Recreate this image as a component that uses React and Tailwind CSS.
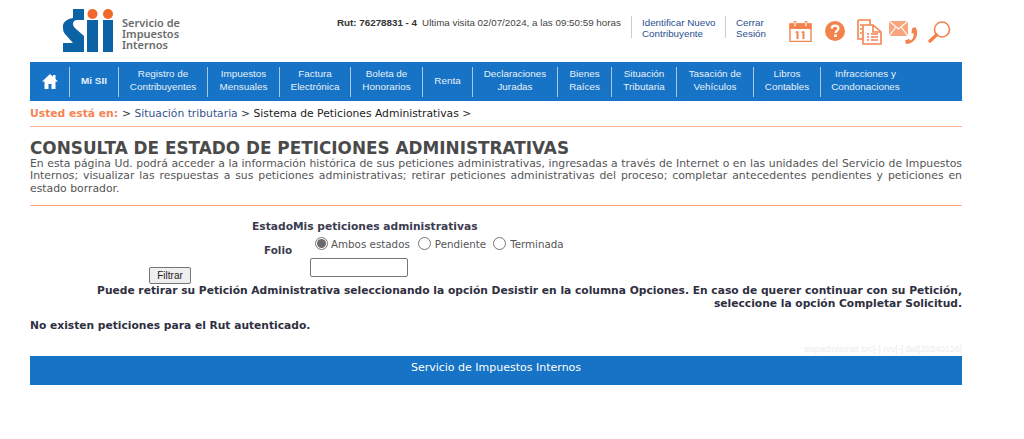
const navItems = [
  { w: 49, l: ["Mi SII"], bold: true },
  { w: 89, l: ["Registro de", "Contribuyentes"] },
  { w: 72, l: ["Impuestos", "Mensuales"] },
  { w: 71, l: ["Factura", "Electrónica"] },
  { w: 72, l: ["Boleta de", "Honorarios"] },
  { w: 50, l: ["Renta"] },
  { w: 85, l: ["Declaraciones", "Juradas"] },
  { w: 54, l: ["Bienes", "Raíces"] },
  { w: 65, l: ["Situación", "Tributaria"] },
  { w: 77, l: ["Tasación de", "Vehículos"] },
  { w: 67, l: ["Libros", "Contables"] },
  { w: 90, l: ["Infracciones y", "Condonaciones"] },
];

function Logo() {
  return (
    <svg width="52" height="44" viewBox="0 0 52 44" className="block">
      <path fill="#0b62a4" d="M10 0H21V11H14C11 11 10 13 10 15C10 17 11 18 13 20L21 27V43H0V34H10L2 25C0 23 0 20 0 17C0 13 4 10 10 9Z" />
      <rect x="24" y="11" width="11" height="32" fill="#0b62a4" />
      <rect x="40" y="11" width="10" height="32" fill="#0b62a4" />
      <circle cx="29.5" cy="5" r="5" fill="#f2672a" />
      <circle cx="45" cy="5" r="5" fill="#f2672a" />
    </svg>
  );
}

const orange = "#f4824d";

function IconCal() {
  return (
    <svg width="23" height="21" viewBox="0 0 23 21" fill="none" stroke={orange}>
      <rect x="1" y="3" width="21" height="17.5" strokeWidth="1.4" />
      <rect x="1" y="3" width="21" height="4.5" fill={orange} />
      <rect x="5" y="0.5" width="2" height="5" fill="#fff" strokeWidth="0.8" />
      <rect x="16" y="0.5" width="2" height="5" fill="#fff" strokeWidth="0.8" />
      <path d="M8.5 10.5V18M14.5 10.5V18" strokeWidth="2" />
      <path d="M6.5 11.5L8.5 10.5M12.5 11.5L14.5 10.5" strokeWidth="1.3" />
    </svg>
  );
}
function IconHelp() {
  return (
    <svg width="20" height="20" viewBox="0 0 20 20">
      <circle cx="10" cy="10" r="10" fill={orange} />
      <path d="M6.7 7.6C6.8 5.6 8.2 4.6 10 4.6C12 4.6 13.4 5.7 13.4 7.4C13.4 9.7 10.6 9.6 10.6 12" fill="none" stroke="#fff" strokeWidth="2.2" />
      <rect x="9.2" y="13.4" width="2.6" height="2.6" fill="#fff" />
    </svg>
  );
}
function IconDocs() {
  return (
    <svg width="25" height="26" viewBox="0 0 25 26" fill="none" stroke={orange} strokeWidth="1.6">
      <path d="M1 1H13V6M6 20H1V1" />
      <path d="M6 6H16L24 13V25H6Z" fill="#fff" />
      <path d="M16 6V13H24" />
      <path d="M3 6H5M3 10H5M3 14H5" />
      <path d="M10 15H12M14 15H21M10 18H12M14 18H21M10 21H12M14 21H21" strokeWidth="1.4" />
    </svg>
  );
}
function IconMail() {
  return (
    <svg width="31" height="23" viewBox="0 0 31 23" fill="none">
      <rect x="0" y="0" width="19" height="15" fill="#f8a47c" />
      <path d="M0 0L9.5 8L19 0M0 15L7 6M19 15L12 6" stroke="#fff" strokeWidth="1.2" />
      <path d="M26 6C31 11 27 23 17 23L16 19.5L20 18L21.5 19.5C24 18.5 25 15 24.6 12.5L22.5 12L23 7.5Z" fill={orange} />
    </svg>
  );
}
function IconSearch() {
  return (
    <svg width="23" height="22" viewBox="0 0 23 22" fill="none" stroke={orange}>
      <circle cx="14" cy="8.5" r="7.5" strokeWidth="1.6" />
      <path d="M8.5 14L2 20" strokeWidth="3.4" strokeLinecap="round" />
    </svg>
  );
}

function Radio({ checked, label, className }) {
  return (
    <span className={"inline-flex items-center " + (className || "")}>
      <span className={"w-[13px] h-[13px] rounded-full border border-[#767676] flex items-center justify-center bg-white mb-[3px] " + (checked ? "mr-[3px]" : "mr-[4px]")}>
        {checked && <span className="w-[9px] h-[9px] rounded-full bg-[#6b6b6b]" />}
      </span>
      {label}
    </span>
  );
}

export default function App() {
  return (
    <div className="w-[1024px] h-[439px] bg-white overflow-hidden font-['DejaVu_Sans',sans-serif] text-[10.7px] text-[#444]">
      <div className="mx-[30px] w-[932px]">
        {/* header */}
        <div className="h-[62px] flex">
          <div className="w-[92px] pl-[33px] pt-[9px] shrink-0"><Logo /></div>
          <div className="w-[215px] shrink-0 pt-[17px] font-['Noto_Sans',sans-serif] font-semibold text-[11px] leading-[11px] text-[#6b6b6b]">
            Servicio de<br />Impuestos<br />Internos
          </div>
          <div className="flex items-start pt-[16px] font-['Liberation_Sans',sans-serif] text-[9.8px] leading-[11px]">
            <div className="w-[294px] shrink-0 h-[24px] pt-[1px] text-[#444] whitespace-nowrap">
              <b className="mr-[5px] text-[#333]">Rut: 76278831 - 4</b>Ultima visita 02/07/2024, a las 09:50:59 horas
            </div>
            <div className="w-[94px] shrink-0 border-l border-[#ccc] h-[22px] pl-[10px] pt-[1px] text-[#2b4f8f]">Identificar Nuevo<br />Contribuyente</div>
            <div className="w-[64px] shrink-0 border-l border-[#ccc] h-[22px] pl-[10px] pt-[1px] text-[#2b4f8f]">Cerrar<br />Sesión</div>
            <div className="flex items-start">
              <div className="pt-[5px]"><IconCal /></div>
              <div className="pt-[5px] ml-[13px]"><IconHelp /></div>
              <div className="pt-[3px] ml-[12px]"><IconDocs /></div>
              <div className="pt-[5px] ml-[7px]"><IconMail /></div>
              <div className="pt-[5px] ml-[8px]"><IconSearch /></div>
            </div>
          </div>
        </div>

        {/* nav */}
        <nav className="h-[39px] bg-[#1673c5] flex items-center font-['Liberation_Sans',sans-serif] text-[9.9px] leading-[13px] text-[#e8f1fa]">
          <div className="w-[39px] h-[30px] shrink-0 flex items-center justify-center">
            <svg width="16" height="15" viewBox="0 0 16 15" fill="#fff"><path d="M8 0L0 7.5H2.5V15H6.5V10H9.5V15H13.5V7.5H16L13.5 5V1H11V2.8Z" /></svg>
          </div>
          {navItems.map((it) => (
            <div key={it.l[0]} style={{ width: it.w }} className={"h-[30px] pb-[3px] shrink-0 border-l border-[#a9c8e6] flex flex-col items-center justify-center text-center whitespace-nowrap " + (it.bold ? "font-bold" : "")}>
              {it.l.map((t) => <span key={t}>{t}</span>)}
            </div>
          ))}
        </nav>

        {/* breadcrumb */}
        <div className="h-[25px] border-b border-[#ffb497] box-content flex items-center text-[10.75px] leading-[24px] whitespace-nowrap">
          <b className="text-[#f58454] mr-[4px]">Usted está en:</b>
          <span className="text-[#333]">&gt;&nbsp;</span>
          <span className="text-[#34558b]">Situación tributaria</span>
          <span className="text-[#333]">&nbsp;&gt;&nbsp;</span>
          <span className="text-[#222]">Sistema de Peticiones Administrativas</span>
          <span className="text-[#333]">&nbsp;&gt;</span>
        </div>

        {/* title */}
        <h1 className="mt-[11px] text-[16.85px] leading-[20px] font-bold text-[#4a4a4a] whitespace-nowrap">CONSULTA DE ESTADO DE PETICIONES ADMINISTRATIVAS</h1>
        <p className="text-[10.85px] leading-[12.5px] text-[#555] text-justify pb-[10px] border-b border-[#ffa67f] -mt-[0.5px]">
          En esta página Ud. podrá acceder a la información histórica de sus peticiones administrativas, ingresadas a través de Internet o en las unidades del Servicio de Impuestos Internos; visualizar las respuestas a sus peticiones administrativas; retirar peticiones administrativas del proceso; completar antecedentes pendientes y peticiones en estado borrador.
        </p>

        {/* form */}
        <div className="grid grid-cols-[119px_115px_46px_1fr] mt-[14px]">
          <div className="col-start-2 col-span-3 ml-[103px] font-bold leading-[14px] text-[#3c3c50]">EstadoMis peticiones administrativas</div>
          <div className="col-start-4 row-start-2 ml-[5px] mt-[2px] flex items-center h-[17px] text-[10.3px] text-[#555] whitespace-nowrap">
            <Radio checked label="Ambos estados" />
            <Radio label="Pendiente" className="ml-[8px]" />
            <Radio label="Terminada" className="ml-[7px]" />
          </div>
          <div className="col-start-3 row-start-2 row-span-2 mt-[9px] font-bold text-[10.4px] leading-[14px] text-[#3c3c50]">Folio</div>
          <div className="col-start-2 row-start-3 pt-[14px]">
            <button className="block w-[42px] h-[17px] bg-[#efefef] border border-[#767676] rounded-[2px] font-['Liberation_Sans',sans-serif] text-[10px] leading-[14px] text-[#222]">Filtrar</button>
          </div>
          <div className="col-start-4 row-start-3 pt-[5px]">
            <div className="w-[98px] h-[19px] border border-[#767676] rounded-[2px] bg-white" />
          </div>
        </div>

        <p className="text-right font-bold leading-[13px] text-[#2f2f3f]">
          Puede retirar su Petición Administrativa seleccionando la opción Desistir en la columna Opciones. En caso de querer continuar con su Petición,<br />seleccione la opción Completar Solicitud.
        </p>
        <p className="mt-[9px] font-bold leading-[14px] text-[#2f2f3f]">No existen peticiones para el Rut autenticado.</p>

        <div className="mt-[11px] h-[11px] text-right font-['Liberation_Sans',sans-serif] text-[8.8px] leading-[11px] text-[#ececec]">sispadinternet src[-] rev[-] dat[20240126]</div>
        <footer className="mt-[1px] h-[29px] bg-[#1673c5] text-center text-white text-[11px] leading-[24px]">Servicio de Impuestos Internos</footer>
      </div>
    </div>
  );
}
